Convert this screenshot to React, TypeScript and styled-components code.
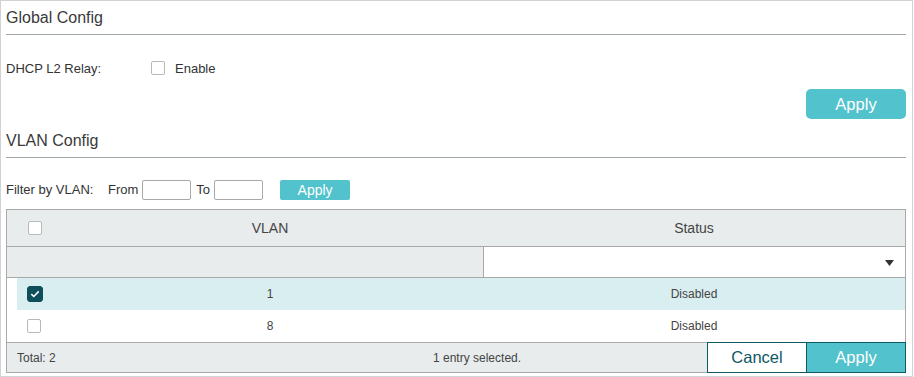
import styled, { createGlobalStyle } from "styled-components";

const GlobalStyle = createGlobalStyle`
  body {
    margin: 0;
    background: #fff;
    font-family: "Liberation Sans", Arial, sans-serif;
    color: #333;
  }
`;

type Entry = { vlan: number; status: string; selected: boolean };

const entries: Entry[] = [
  { vlan: 1, status: "Disabled", selected: true },
  { vlan: 8, status: "Disabled", selected: false },
];

const Check = ({ checked }: { checked?: boolean }) => (
  <CheckBox $checked={checked}>
    {checked && (
      <svg width="10" height="8" viewBox="0 0 10 8">
        <path d="M1.3 4.2 L3.8 6.5 L8.7 1.4" fill="none" stroke="#fff" strokeWidth="1.6" />
      </svg>
    )}
  </CheckBox>
);

const App = () => {
  const selectedCount = entries.filter((e) => e.selected).length;
  return (
    <>
      <GlobalStyle />
      <Frame>
        <Heading>Global Config</Heading>
        <FormRow>
          <Label>DHCP L2 Relay:</Label>
          <Check />
          <OptionText>Enable</OptionText>
        </FormRow>
        <ButtonRow>
          <PrimaryButton>Apply</PrimaryButton>
        </ButtonRow>

        <Heading>VLAN Config</Heading>
        <FilterRow>
          <Label $width={102}>Filter by VLAN:</Label>
          <span>From</span>
          <SmallInput />
          <span>To</span>
          <SmallInput />
          <FilterButton>Apply</FilterButton>
        </FilterRow>

        <Table>
          <HeadRow>
            <CheckCell $pad={21}>
              <Check />
            </CheckCell>
            <VlanCell>VLAN</VlanCell>
            <StatusCell>Status</StatusCell>
          </HeadRow>
          <SearchRow>
            <SearchBlank />
            <SearchSelect>
              <svg width="9" height="6" viewBox="0 0 9 6">
                <polygon points="0,0 9,0 4.5,6" fill="#333" />
              </svg>
            </SearchSelect>
          </SearchRow>
          <Body>
            {entries.map((e) => (
              <Row key={e.vlan} $selected={e.selected}>
                <CheckCell $pad={10}>
                  <Check checked={e.selected} />
                </CheckCell>
                <VlanCell>{e.vlan}</VlanCell>
                <StatusCell>{e.status}</StatusCell>
              </Row>
            ))}
          </Body>
          <Footer>
            <Total>Total: {entries.length}</Total>
            <Selected>{selectedCount} entry selected.</Selected>
            <CancelButton>Cancel</CancelButton>
            <SubmitButton>Apply</SubmitButton>
          </Footer>
        </Table>
      </Frame>
    </>
  );
};

export default App;

const Frame = styled.div`
  box-sizing: border-box;
  width: 913px;
  height: 377px;
  border: 1px solid #d2d2d2;
  padding: 0 6px 0 5px;
  display: flex;
  flex-direction: column;
`;

const Heading = styled.div`
  height: 33px;
  line-height: 33px;
  font-size: 16px;
  color: #3a3a3a;
  border-bottom: 1px solid #9fa8a8;
  &:nth-of-type(n + 2) {
    margin-top: 5px;
  }
`;

const FormRow = styled.div`
  display: flex;
  align-items: center;
  height: 20px;
  margin-top: 23px;
  font-size: 13px;
  color: #333;
`;

const Label = styled.span<{ $width?: number }>`
  width: ${(p) => p.$width ?? 145}px;
  flex-shrink: 0;
`;

const OptionText = styled.span`
  margin-left: 10px;
`;

const CheckBox = styled.span<{ $checked?: boolean }>`
  box-sizing: border-box;
  display: inline-flex;
  align-items: center;
  justify-content: center;
  width: ${(p) => (p.$checked ? 16 : 14)}px;
  height: ${(p) => (p.$checked ? 16 : 14)}px;
  border: 1px solid ${(p) => (p.$checked ? "#0c4f5b" : "#b9b9b9")};
  border-radius: ${(p) => (p.$checked ? 3 : 2)}px;
  background: ${(p) => (p.$checked ? "#0c4f5b" : "#fff")};
`;

const ButtonRow = styled.div`
  display: flex;
  justify-content: flex-end;
  margin-top: 11px;
`;

const PrimaryButton = styled.button`
  width: 100px;
  height: 30px;
  border: none;
  border-radius: 5px;
  background: #52c2cc;
  color: #fff;
  font-family: inherit;
  font-size: 16.5px;
  padding: 0;
`;

const FilterRow = styled.div`
  display: flex;
  align-items: center;
  height: 21px;
  margin-top: 21px;
  font-size: 13px;
  color: #333;
  span + input {
    margin-left: 4px;
  }
  input + span {
    margin-left: 5px;
  }
`;

const SmallInput = styled.input`
  box-sizing: border-box;
  width: 49px;
  height: 20px;
  border: 1px solid #a9a9a9;
  border-radius: 2px;
  padding: 0;
`;

const FilterButton = styled.button`
  width: 70px;
  height: 20px;
  margin-left: 17px;
  border: none;
  border-radius: 2px;
  background: #52c2cc;
  color: #fff;
  font-family: inherit;
  font-size: 14px;
  padding: 0;
`;

const Table = styled.div`
  margin-top: 9px;
  border: 1px solid #a9a9a9;
  display: flex;
  flex-direction: column;
`;

const HeadRow = styled.div`
  display: flex;
  align-items: center;
  height: 36px;
  background: #e8eced;
  border-bottom: 1px solid #a9a9a9;
  font-size: 14px;
  color: #444;
`;

const CheckCell = styled.div<{ $pad: number }>`
  display: flex;
  align-items: center;
  width: ${(p) => 50 - (p.$pad === 10 ? 10 : 0)}px;
  padding-left: ${(p) => p.$pad}px;
  box-sizing: border-box;
`;

const VlanCell = styled.div`
  width: 426px;
  text-align: center;
`;

const StatusCell = styled.div`
  flex: 1;
  text-align: center;
`;

const SearchRow = styled.div`
  display: flex;
  height: 30px;
  border-bottom: 1px solid #a9a9a9;
`;

const SearchBlank = styled.div`
  width: 476px;
  background: #e8eced;
  border-right: 1px solid #a9a9a9;
`;

const SearchSelect = styled.div`
  flex: 1;
  background: #fff;
  display: flex;
  align-items: center;
  justify-content: flex-end;
  padding-right: 11px;
  padding-top: 2px;
`;

const Body = styled.div`
  display: flex;
  flex-direction: column;
  padding-left: 10px;
`;

const Row = styled.div<{ $selected?: boolean }>`
  display: flex;
  align-items: center;
  height: 32px;
  font-size: 12px;
  color: #444;
  background: ${(p) => (p.$selected ? "#d9eef0" : "#fff")};
`;

const Footer = styled.div`
  display: flex;
  align-items: center;
  height: 29px;
  background: #e8eced;
  border-top: 1px solid #a9a9a9;
  font-size: 12px;
  color: #444;
`;

const Total = styled.span`
  width: 416px;
  padding-left: 10px;
`;

const Selected = styled.span`
  flex: 1;
`;

const FooterButton = styled.button`
  box-sizing: border-box;
  width: 100px;
  height: 31px;
  margin: -1px 0 -1px;
  border: 1px solid #0d5965;
  font-family: inherit;
  font-size: 16.5px;
  padding: 0;
`;

const CancelButton = styled(FooterButton)`
  background: #fff;
  color: #0d5965;
`;

const SubmitButton = styled(FooterButton)`
  margin-left: -1px;
  margin-right: -1px;
  background: #52c2cc;
  color: #fff;
`;
